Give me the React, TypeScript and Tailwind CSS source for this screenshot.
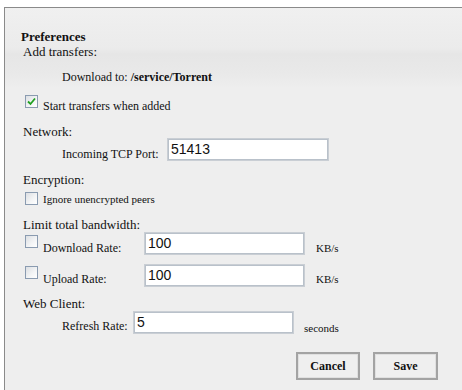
import React from "react";

function Box({ checked = false }: { checked?: boolean }) {
  return (
    <span className="flex h-[13px] w-[13px] shrink-0 items-center justify-center border border-[#8a9bb0] bg-[linear-gradient(135deg,#dcdfe3_0%,#f4f5f6_60%,#ffffff_100%)]">
      {checked && (
        <svg width="9" height="9" viewBox="0 0 9 9">
          <path d="M1 4.5 L3.5 7 L8 1.5" fill="none" stroke="#21a121" strokeWidth="1.8" />
        </svg>
      )}
    </span>
  );
}

function Field({ value, w, mt }: { value: string; w: string; mt: string }) {
  return (
    <div
      className={`${w} ${mt} h-[23px] shrink-0 border border-[#c9ced4] bg-white shadow-[inset_0_0_0_1px_#b9c1ca] pl-[3px] font-['Liberation_Sans',Arial,sans-serif] text-[14px] leading-[21px] text-[#111]`}
    >
      {value}
    </div>
  );
}

export default function App() {
  return (
    <div className="h-[390px] w-[462px] overflow-hidden bg-white pt-[7px] pl-[4px] font-[Liberation_Serif,serif]">
      <div className="h-[383px] w-[458px] border-l border-t border-[#8a8a8a] bg-[linear-gradient(to_bottom,#f0f0f0_0px,#ebebeb_40px,#e6e6e6_46px,#e9e9e9_66px,#eeeeee_80px)] text-[#111]">
        <div className="h-[36px] pt-[21px] pl-[16px] text-[13px] font-bold leading-[15px]">Preferences</div>
        <div className="h-[15px] pl-[18px] text-[13px] leading-[15px]">Add transfers:</div>
        <div className="h-[25px] pt-[11px] pl-[57px] text-[12px] leading-[14px]">
          Download to: <span className="font-bold">/service/Torrent</span>
        </div>
        <div className="flex h-[32px] items-start pl-[20px]">
          <div className="mt-[11px]"><Box checked /></div>
          <span className="ml-[5px] mt-[15px] text-[12px] leading-[14px]">Start transfers when added</span>
        </div>
        <div className="h-[21px] pt-[8px] pl-[18px] text-[13px] leading-[15px]">Network:</div>
        <div className="flex h-[26px] items-start pl-[57px]">
          <span className="mt-[10px] w-[105px] text-[12px] leading-[14px]">Incoming TCP Port:</span>
          <Field value="51413" w="w-[162px]" mt="mt-[1px]" />
        </div>
        <div className="h-[24px] pt-[9px] pl-[18px] text-[13px] leading-[15px]">Encryption:</div>
        <div className="flex h-[25px] items-start pl-[20px]">
          <div className="mt-[5px]"><Box /></div>
          <span className="ml-[5px] mt-[6px] text-[11px] leading-[13px]">Ignore unencrypted peers</span>
        </div>
        <div className="h-[20px] pt-[5px] pl-[18px] text-[13px] leading-[15px]">Limit total bandwidth:</div>
        <div className="flex h-[30px] items-start pl-[20px]">
          <div className="mt-[3px]"><Box /></div>
          <span className="ml-[5px] mt-[9px] w-[101px] text-[12px] leading-[14px]">Download Rate:</span>
          <Field value="100" w="w-[161px]" mt="mt-0" />
          <span className="ml-[11px] mt-[9px] text-[11px] leading-[14px]">KB/s</span>
        </div>
        <div className="flex h-[28px] items-start pl-[20px]">
          <div className="mt-[4px]"><Box /></div>
          <span className="ml-[5px] mt-[10px] w-[101px] text-[12px] leading-[14px]">Upload Rate:</span>
          <Field value="100" w="w-[161px]" mt="mt-[2px]" />
          <span className="ml-[11px] mt-[10px] text-[11px] leading-[14px]">KB/s</span>
        </div>
        <div className="h-[20px] pt-[6px] pl-[18px] text-[13px] leading-[15px]">Web Client:</div>
        <div className="flex h-[30px] items-start pl-[57px]">
          <span className="mt-[9px] w-[71px] text-[12px] leading-[14px]">Refresh Rate:</span>
          <Field value="5" w="w-[161px]" mt="mt-[1px]" />
          <span className="ml-[10px] mt-[11px] text-[11px] leading-[14px]">seconds</span>
        </div>
        <div className="mt-[12px] flex gap-[13px] pl-[291px]">
          <button className="h-[28px] w-[64px] border-2 border-[#a3a3a3] bg-[#efefef] text-[12px] font-bold shadow-[inset_0_0_0_1px_#e0e0e0]">
            Cancel
          </button>
          <button className="h-[28px] w-[65px] border-2 border-[#a3a3a3] bg-[#efefef] text-[12px] font-bold shadow-[inset_0_0_0_1px_#e0e0e0]">
            Save
          </button>
        </div>
      </div>
    </div>
  );
}
